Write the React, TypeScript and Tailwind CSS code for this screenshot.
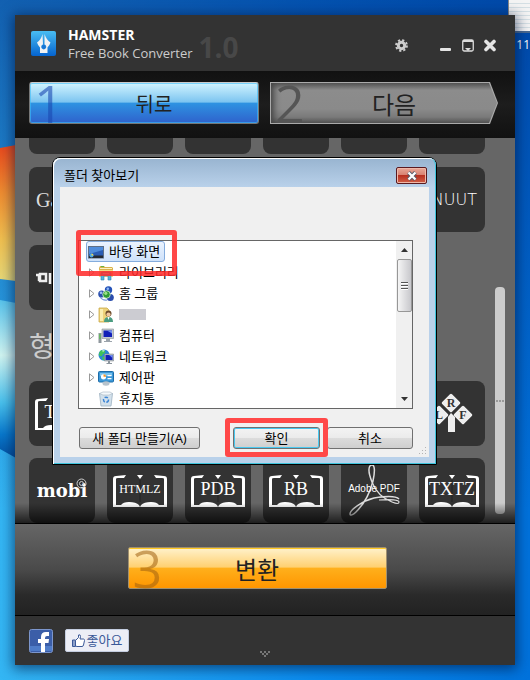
import type { ReactNode } from "react"

const KR = "font-['Open_Sans','Noto_Sans_CJK_KR',sans-serif]"

function LibraryIcon() {
  return (
    <svg width="16" height="16" viewBox="0 0 16 16">
      <path d="M1 3l1-2h4l1 1h7l1 1v9H1z" fill="#d9b24c" />
      <path d="M1 5h14v7H1z" fill="#f3dc85" />
      <path d="M2 3h12v1H2z" fill="#fbf3c4" />
      <path d="M3 1h3v1H3z" fill="#63b540" />
      <path d="M3 15V9q0-2 2-2h6q2 0 2 2v6h-3v-4H6v4z" fill="#55b4dc" stroke="#2b87b5" strokeWidth=".6" />
      <path d="M5 8h6v1H5z" fill="#c4ecf8" />
    </svg>
  )
}

function HomegroupIcon() {
  return (
    <svg width="16" height="16" viewBox="0 0 16 16">
      <circle cx="10.500" cy="4" r="3.700" fill="#2452b8" />
      <circle cx="3.700" cy="8" r="3.500" fill="#2b50ad" />
      <circle cx="12.300" cy="11.500" r="3.500" fill="#2a4dac" />
      <circle cx="8.500" cy="8.500" r="3.800" fill="#2f9c35" stroke="#d7f0d4" strokeWidth=".8" />
      <circle cx="7.800" cy="7.300" r="1.600" fill="#9ce087" />
      <circle cx="9.800" cy="2.800" r="1.300" fill="#8fb8f2" />
      <circle cx="3" cy="6.800" r="1.300" fill="#9dbdf5" />
      <path d="M2 11q3 4 7 3" stroke="#7696d8" strokeWidth="1.200" fill="none" />
    </svg>
  )
}

function UserIcon() {
  return (
    <svg width="16" height="16" viewBox="0 0 16 16">
      <path d="M1 1h8l2 2v12H1z" fill="#edd27a" stroke="#c9a847" strokeWidth=".8" />
      <path d="M2 2h3v12H2z" fill="#faedb0" />
      <circle cx="10.500" cy="6.500" r="3" fill="#6b4a2b" />
      <circle cx="10.500" cy="7.500" r="2.100" fill="#f0c7a0" />
      <path d="M6 15q0-5 4.500-5T15 15z" fill="#4a9c80" />
      <path d="M9.500 10h2l-1 3z" fill="#fff" />
    </svg>
  )
}

function ComputerIcon() {
  return (
    <svg width="16" height="16" viewBox="0 0 16 16">
      <path d="M4 1h11.500v9.500H4z" fill="#c3c9cf" stroke="#8a9299" strokeWidth=".6" />
      <path d="M5.500 2.500h8.500v6.500H5.500z" fill="#1220b8" />
      <path d="M9 2.500h5v3z" fill="#7390ee" />
      <path d="M8 11h4v2h2v1H6v-1h2z" fill="#9ca4ac" />
      <path d="M.5 5h3v10h-3z" fill="#8f979d" />
      <path d="M1.300 6h1.200v5H1.300z" fill="#58c04a" />
    </svg>
  )
}

function NetworkIcon() {
  return (
    <svg width="16" height="16" viewBox="0 0 16 16">
      <circle cx="6" cy="6" r="5.500" fill="#2a86d8" />
      <path d="M2 2q4-2 5 0t-2 3q-1 3-3 2T1 5zM4 8l4-1v3l-3 1.500z" fill="#3fc25a" />
      <path d="M4 1.500l3-.5-2 2z" fill="#d6f5e0" />
      <path d="M6.500 5h9v7h-9z" fill="#b9c1c9" stroke="#6d767f" strokeWidth=".5" />
      <path d="M7.500 6h7v5h-7z" fill="#1220b8" />
      <path d="M11 6h3.500v3z" fill="#6f8cf0" />
      <path d="M10 12h2v2h2v1H8.500v-1H10z" fill="#8c959d" />
    </svg>
  )
}

function ControlPanelIcon() {
  return (
    <svg width="16" height="16" viewBox="0 0 16 16">
      <rect x=".5" y="1.500" width="15" height="10.500" rx="1" fill="#3b98d8" stroke="#1d6ca8" />
      <path d="M2 3h12v3H2z" fill="#7cc4ee" />
      <circle cx="5.500" cy="6.800" r="2.600" fill="#fff" />
      <path d="M5.500 6.800V4.200a2.600 2.600 0 0 1 2.600 2.600z" fill="#f09428" />
      <path d="M9.500 5h4v1.200h-4zM9.500 8h4v1.200h-4z" fill="#fff" />
      <ellipse cx="8" cy="13.500" rx="3.500" ry="2.200" fill="#b7c3cc" />
    </svg>
  )
}

function RecycleIcon() {
  return (
    <svg width="16" height="16" viewBox="0 0 16 16">
      <path d="M1.500 2.500h13L13 15H3z" fill="#d3e1ec" stroke="#9db1c2" strokeWidth=".8" />
      <path d="M1.500 2.500L5 1h7l2.500 1.500L11 4H5z" fill="#f4f8fb" stroke="#a5b4c1" strokeWidth=".6" />
      <circle cx="8" cy="8.800" r="2.500" fill="none" stroke="#3d86d6" strokeWidth="1.500" strokeDasharray="3.500 1.500" />
    </svg>
  )
}

function DesktopIcon() {
  return (
    <svg width="16" height="16" viewBox="0 0 16 16">
      <rect x=".5" y="2.500" width="15" height="11.500" fill="#2a5db4" stroke="#5e6f86" />
      <path d="M1 3h14v3L1 10z" fill="#4f8ddc" />
      <path d="M1 11.500h14V14H1z" fill="#252b33" />
      <circle cx="3.500" cy="11.500" r="2" fill="#49a8e8" />
      <path d="M3.500 9.500a2 2 0 0 1 2 2h-2z" fill="#f2d549" />
    </svg>
  )
}

const TREE: { label: string; icon: ReactNode; expandable: boolean }[] = [
  { label: "라이브러리", icon: <LibraryIcon />, expandable: true },
  { label: "홈 그룹", icon: <HomegroupIcon />, expandable: true },
  { label: "", icon: <UserIcon />, expandable: true },
  { label: "컴퓨터", icon: <ComputerIcon />, expandable: true },
  { label: "네트워크", icon: <NetworkIcon />, expandable: true },
  { label: "제어판", icon: <ControlPanelIcon />, expandable: true },
  { label: "휴지통", icon: <RecycleIcon />, expandable: false },
]

function Tile({ children }: { children?: ReactNode }) {
  return (
    <div className="relative flex h-[65px] items-center justify-center overflow-hidden rounded-lg bg-[#333]">
      {children}
    </div>
  )
}

function Book({ label, size }: { label: string; size: string }) {
  return (
    <div className="relative flex h-8 w-[54px] items-center justify-center">
      <svg className="absolute inset-0" width="54" height="32" viewBox="0 0 54 32" fill="#fff">
        <path d="M13 0L3 1Q0 1 0 4v28h27l-1-2q-3-3-10-3-6 0-8 3H3V4q0-1 2-1h6z" />
        <path d="M41 0l10 1q3 0 3 3v28H27l1-2q3-3 10-3 6 0 8 3h5V4q0-1-2-1h-6z" />
        <path d="M24 0h6l-3 4z" />
        <path d="M26 5h2v22h-2z" fill="#2a2a2a" />
      </svg>
      <span className={`relative -mt-1 font-['Liberation_Serif',serif] leading-none text-white ${size}`}>{label}</span>
    </div>
  )
}

function Lrf() {
  return (
    <svg width="66" height="65" viewBox="0 0 66 65">
      <g fill="#eee">
        <rect x="25" y="15" width="14" height="14" rx="1.500" transform="rotate(45 32 22)" />
        <rect x="13" y="27" width="14" height="14" rx="1.500" transform="rotate(45 20 34)" />
        <rect x="37" y="27" width="14" height="14" rx="1.500" transform="rotate(45 44 34)" />
        <path d="M29 36l3-4 4 4v15h-7z" />
      </g>
      <g className="font-['Liberation_Serif',serif] text-[12px] font-bold" fill="#333" textAnchor="middle">
        <text x="32" y="26">R</text>
        <text x="20" y="38">L</text>
        <text x="44" y="38">F</text>
      </g>
    </svg>
  )
}

function Pdf() {
  return (
    <>
      <svg className="absolute inset-0" width="66" height="65" viewBox="0 0 66 65" fill="none" stroke="#ddd">
        <path
          d="M31 24C26 12 28 7 31 7s3 7 1 16c-3 12-10 24-17 31-3 3-6 4-6 2 0-4 12-13 24-16 12-2 22-2 25 1"
          strokeWidth="1.500"
        />
        <path d="M31 24c3 8 10 16 20 20 5 2 7 2 7 0s-8-3-20-2" strokeWidth="1.200" />
      </svg>
      <span className="relative -mt-1 whitespace-nowrap font-['Liberation_Sans_Narrow','Liberation_Sans',sans-serif] text-[10px] leading-none text-white">
        Adobe PDF
      </span>
    </>
  )
}

function Wallpaper() {
  return (
    <svg className="absolute left-0 top-[140px]" width="16" height="330" viewBox="0 0 16 330">
      <defs>
        <linearGradient id="warm" x1="0" y1="0" x2="0" y2="1">
          <stop offset="0" stopColor="#e8481c" />
          <stop offset=".35" stopColor="#ee8c30" />
          <stop offset=".7" stopColor="#f0c050" />
          <stop offset="1" stopColor="#e6d878" />
        </linearGradient>
        <linearGradient id="cool" x1="0" y1="0" x2="0" y2="1">
          <stop offset="0" stopColor="#58c4ec" />
          <stop offset=".35" stopColor="#d0f4f0" />
          <stop offset=".65" stopColor="#48c0ec" />
          <stop offset=".85" stopColor="#0878cc" />
          <stop offset="1" stopColor="#0450a0" />
        </linearGradient>
      </defs>
      <path d="M0 8l16-3v136l-16-2z" fill="url(#warm)" />
      <path d="M0 160l16 3v155l-16-9z" fill="url(#cool)" />
    </svg>
  )
}

function TitleBar() {
  return (
    <header className="flex h-14 items-center bg-[#333] pl-4 pr-[19px]">
      <svg width="25" height="25" viewBox="0 0 25 25">
        <defs>
          <linearGradient id="logo" x1="0" y1="0" x2="0" y2="1">
            <stop offset="0" stopColor="#49bdf2" />
            <stop offset="1" stopColor="#0463cf" />
          </linearGradient>
        </defs>
        <rect width="25" height="25" rx="2" fill="url(#logo)" />
        <path
          d="M11.500 3L12 13.500a2.500 2.500 0 1 0 1.500 0L13.500 3q2 6 6 8.500-1 3-3 5V22H9v-5.500q-2-2-3-5Q10 9 11.500 3z"
          fill="#f0f2f4"
        />
        <circle cx="12.700" cy="15.800" r="1.800" fill="#1674d4" />
      </svg>
      <div className="ml-3 pt-0.5 font-['Open_Sans',sans-serif]">
        <h1 className="text-sm font-bold leading-[18px] text-white">HAMSTER</h1>
        <p className="whitespace-nowrap text-[13px] leading-[18px] text-[#ccc]">Free Book Converter</p>
      </div>
      <span className="ml-1.5 mt-2 font-['Open_Sans',sans-serif] text-[28px] font-bold leading-none text-[#484848]">1.0</span>
      <div className="ml-auto mt-1 flex items-center">
        <button aria-label="Settings" className="mr-8">
          <svg width="13" height="13" viewBox="0 0 13 13" fill="none" stroke="#ccc">
            <circle cx="6.500" cy="6.500" r="3.200" strokeWidth="3" />
            <circle cx="6.500" cy="6.500" r="5.400" strokeWidth="2" strokeDasharray="2.200 2.040" />
          </svg>
        </button>
        <button aria-label="Minimize" className="mr-[11px]">
          <svg width="11" height="13" viewBox="0 0 11 13">
            <rect y="9" width="11" height="3" rx="1" fill="#e4e4e4" />
          </svg>
        </button>
        <button aria-label="Restore" className="mr-2.5">
          <svg width="12" height="13" viewBox="0 0 12 13">
            <rect x=".75" y="1" width="10.500" height="11" rx="1.500" fill="none" stroke="#ddd" strokeWidth="1.300" />
            <path d="M1 1h10v2H1zM3 9h6l-3 3z" fill="#ddd" />
          </svg>
        </button>
        <button aria-label="Close">
          <svg width="12" height="13" viewBox="0 0 12 13">
            <path d="M2 2.500l8 8M10 2.500l-8 8" stroke="#e4e4e4" strokeWidth="3.600" strokeLinecap="round" />
          </svg>
        </button>
      </div>
    </header>
  )
}

const STEP_NUMBER = "absolute inset-y-0 left-1 font-['Open_Sans',sans-serif] text-[52px] leading-[40px]"

function Steps() {
  return (
    <nav className="flex h-[67px] gap-[11px] bg-linear-to-b from-[#111] via-[#1d1d1d] to-[#111] pb-3.5 pl-3.5 pr-[17px] pt-[11px]">
      <button className="relative flex-1 rounded-[3px] border border-[#777] border-t-[#ccc] bg-[linear-gradient(#d2f4ff,#7cc4f0_48%,#2e93e2_50%,#2f62cc)] pt-1 text-xl text-[#222] shadow-[inset_0_0_0_1px_rgba(60,190,250,0.6)]">
        <span className={`${STEP_NUMBER} text-[#1a48b0]/60`}>1</span>
        <span className="relative pl-5">뒤로</span>
      </button>
      <button className="relative flex-1 bg-[#aaa] pt-1 text-2xl text-[#222] [clip-path:polygon(0_0,calc(100%-8px)_0,100%_50%,calc(100%-8px)_100%,0_100%)]">
        <span className="absolute inset-px bg-[linear-gradient(#555,#8c8c8c_18%,#8a8a8a_65%,#7a7a7a_85%,#555)] shadow-[inset_6px_0_6px_-3px_#444] [clip-path:polygon(0_0,calc(100%-8px)_0,100%_50%,calc(100%-8px)_100%,0_100%)]">
          <span className={`${STEP_NUMBER} text-[#555]`}>2</span>
        </span>
        <span className="relative pl-5">다음</span>
      </button>
    </nav>
  )
}

function FormatList() {
  return (
    <section className="relative flex h-[385px] overflow-hidden bg-[#666] pl-3.5">
      <div className="flex-1">
        <div className="grid grid-cols-6 gap-x-3">
          {[0, 1, 2, 3, 4, 5].map((i) => (
            <div key={i} className="h-4 rounded-b-lg bg-[#333]" />
          ))}
        </div>
        <div className="mt-[13px] grid grid-cols-6 gap-x-3 gap-y-[13px]">
          <Tile>
            <span className="w-full pl-[7px] font-['Liberation_Serif',serif] text-xl text-[#ddd]">Ga</span>
          </Tile>
          <Tile />
          <Tile />
          <Tile />
          <Tile />
          <Tile>
            <span className="w-full pr-2 text-right font-['DejaVu_Sans',sans-serif] text-base font-extralight text-white">NUUT</span>
          </Tile>
          <Tile>
            <svg className="w-full" width="66" height="12" viewBox="0 0 66 12" fill="none" stroke="#eee" strokeWidth="2">
              <path d="M7 3h3v6M11 2h6v7h-6zM21 12V1" strokeWidth="2.500" />
            </svg>
          </Tile>
        </div>
        <h2 className="flex h-[71px] items-center text-[28px] leading-none text-[#ccc]">형식</h2>
        <div className="grid grid-cols-6 gap-3">
          <Tile>
            <Book label="TXT" size="text-lg" />
          </Tile>
          <Tile />
          <Tile />
          <Tile />
          <Tile />
          <Tile>
            <Lrf />
          </Tile>
          <Tile>
            <span className="font-['DejaVu_Serif',serif] text-lg font-bold leading-none text-white">mobi</span>
            <svg className="absolute right-2 top-5" width="11" height="11" viewBox="0 0 11 11" fill="none" stroke="#ccc">
              <circle cx="5.500" cy="5.500" r="4.500" />
              <circle cx="5.500" cy="5.500" r="2" />
            </svg>
          </Tile>
          <Tile>
            <Book label="HTMLZ" size="text-xs" />
          </Tile>
          <Tile>
            <Book label="PDB" size="text-lg" />
          </Tile>
          <Tile>
            <Book label="RB" size="text-lg" />
          </Tile>
          <Tile>
            <Pdf />
          </Tile>
          <Tile>
            <Book label="TXTZ" size="text-lg" />
          </Tile>
        </div>
      </div>
      <div className="w-[30px] pl-2.5 pt-[149px]">
        <div className="flex h-[227px] w-2.5 items-center justify-center gap-px rounded bg-[#ccc]">
          <i className="size-0.5 bg-[#999]" />
          <i className="size-0.5 bg-[#999]" />
          <i className="size-0.5 bg-[#999]" />
        </div>
      </div>
      <div className="absolute inset-x-0 bottom-0 h-5 bg-linear-to-b from-transparent to-black/70" />
    </section>
  )
}

const WIN_BUTTON =
  "rounded-[3px] border border-[#707070] bg-[linear-gradient(#f3f3f3,#ebebeb_48%,#dcdcdc_50%,#cfcfcf)] text-[13px] leading-none text-black"

function BrowseDialog() {
  return (
    <div
      role="dialog"
      aria-labelledby="browse-title"
      className="absolute left-[37px] top-[142px] w-[385px] rounded-t-lg border border-black bg-[#b9d1ea] text-[13px] text-black shadow-[inset_1px_1px_0_#fff,inset_-1px_-1px_0_#3ec4dc]"
    >
      <div className="flex h-[29px] items-center justify-between rounded-t-[7px] bg-linear-to-b from-[#98b4d0] to-[#b9d1ea] pl-[11px] pr-[9px] shadow-[inset_1px_1px_0_#fff,inset_-1px_0_0_#3ec4dc]">
        <h2 id="browse-title" className="mt-1.5">
          폴더 찾아보기
        </h2>
        <button
          aria-label="닫기"
          className="mt-1.5 flex h-[17px] w-[31px] items-center justify-center rounded-xs border border-[#5a1a20] bg-[linear-gradient(#e8a898,#d88070_48%,#b83020_50%,#d06048)] shadow-[inset_0_0_0_1px_#f0b8a8]"
        >
          <svg width="12" height="10" viewBox="0 0 12 10">
            <path d="M2.500 1.500l7 7M9.500 1.500l-7 7" stroke="#555b6b" strokeWidth="4" />
            <path d="M2.500 1.500l7 7M9.500 1.500l-7 7" stroke="#fff" strokeWidth="2.300" />
          </svg>
        </button>
      </div>
      <div className="relative mx-[7px] mb-[7px] bg-[#f0f0f0] pb-2 pl-[18px] pr-4 pt-[53px]">
        <div className="relative">
          <div className="flex h-[169px] overflow-hidden border border-[#666] bg-white">
            <ul className="flex-1 pl-[7px]">
              <li className="flex h-[21px] w-[79px] items-center gap-[5px] whitespace-nowrap rounded-[3px] border border-[#84acdd] bg-linear-to-b from-[#eaf3fe] to-[#cfe2fa] pl-px">
                <DesktopIcon />
                바탕 화면
              </li>
              {TREE.map((item, i) => (
                <li key={i} className="flex h-[21px] items-center pl-[3px]">
                  <svg className="mr-[3px]" width="6" height="9" viewBox="0 0 6 9">
                    {item.expandable && <path d="M.5.8v7.400l4.500-3.700z" fill="#fff" stroke="#999" />}
                  </svg>
                  {item.icon}
                  {item.label ? (
                    <span className="ml-[5px]">{item.label}</span>
                  ) : (
                    <span className="ml-[5px] h-[11px] w-[27px] bg-[#ccccd2]" />
                  )}
                </li>
              ))}
            </ul>
            <div className="flex w-4 flex-col items-center bg-[#f0f0f0]">
              <svg className="my-[7px]" width="7" height="4" viewBox="0 0 7 4">
                <path d="M3.500 0L7 4H0z" fill="#333" />
              </svg>
              <div className="flex h-[53px] w-[15px] flex-col items-center justify-center gap-px rounded-xs border border-[#979797] bg-linear-to-r from-[#f5f5f5] to-[#c8c8cc]">
                <i className="h-0.5 w-[7px] border-t border-[#555] bg-white" />
                <i className="h-0.5 w-[7px] border-t border-[#555] bg-white" />
                <i className="h-0.5 w-[7px] border-t border-[#555] bg-white" />
              </div>
              <svg className="mb-[7px] mt-auto" width="7" height="4" viewBox="0 0 7 4">
                <path d="M0 0h7L3.500 4z" fill="#333" />
              </svg>
            </div>
          </div>
          <span className="absolute -left-0.5 -top-2.5 h-[46px] w-[101px] rounded-[3px] border-5 border-[#ff2828]/85" />
        </div>
        <div className="mt-[18px] flex h-[22px]">
          <button className={`${WIN_BUTTON} ml-px mr-[33px] w-[121px]`}>새 폴더 만들기(A)</button>
          <div className="relative flex w-[87px]">
            <button className={`${WIN_BUTTON} flex-1 border-[#3c7fb1] shadow-[inset_0_0_0_1px_#48c8f0]`}>확인</button>
            <span className="absolute -inset-x-2 -bottom-2 -top-[9px] rounded-[3px] border-5 border-[#ff4848]" />
          </div>
          <button className={`${WIN_BUTTON} ml-[7px] w-[86px]`}>취소</button>
        </div>
        <svg className="absolute bottom-0.5 right-0.5" width="9" height="9" viewBox="0 0 9 9" fill="#b4b4b4">
          <path d="M7 1h1v1H7zM4 4h1v1H4zM7 4h1v1H7zM1 7h1v1H1zM4 7h1v1H4zM7 7h1v1H7z" />
        </svg>
      </div>
    </div>
  )
}

export default function App() {
  return (
    <main
      className={`relative min-h-screen overflow-hidden bg-[linear-gradient(to_bottom,rgba(0,50,140,0.65),rgba(0,60,160,0)_75%),linear-gradient(to_right,#34b6f4,#0a8cf0_60%,#0072dc)] p-[15px] ${KR}`}
    >
      <Wallpaper />
      <div className="absolute right-0 top-0 h-[33px] w-[22px] border-b-2 border-l border-b-[#4a6a90] border-l-[#888] bg-[repeating-linear-gradient(#f4f4f4_0_3px,#d4dfe4_3px_4px)]" />
      <span className="absolute right-0 top-[37px] text-xs text-white">111</span>

      <div className="relative bg-[#333] shadow-[0_2px_12px_2px_rgba(0,20,60,0.6)]">
        <TitleBar />
        <Steps />
        <FormatList />
        <section className="flex justify-center border-y border-black bg-[linear-gradient(#666,#4a4a4a_50%,#2a2a2a_78%,#222)] pb-[26px] pl-3.5 pr-[30px] pt-[23px]">
          <button className="relative h-[42px] w-[259px] rounded-xs border border-[#a09070] bg-[linear-gradient(#fff2cc,#ffd070_48%,#ffb01c_50%,#ff9600)] pt-1 text-2xl text-[#222] shadow-[inset_0_1px_0_#ffc820]">
            <span className={`${STEP_NUMBER} text-[#a06010]/55`}>3</span>
            <span className="relative">변환</span>
          </button>
        </section>
        <footer className="relative flex h-[49px] items-center gap-3 pl-3.5">
          <a href="#facebook" aria-label="Facebook">
            <svg width="24" height="24" viewBox="0 0 24 24">
              <rect x=".5" y=".5" width="23" height="23" rx="2" fill="#3b5ea8" stroke="#7c96cc" />
              <path d="M1 17h22v5H1z" fill="#4f7cc8" />
              <path d="M12 23v-9H9v-4h3V8q0-5 5-5h3v4h-2q-2 0-2 2v1h4l-.5 4H16v9z" fill="#fff" />
            </svg>
          </a>
          <button className="flex h-[23px] w-16 items-center justify-center gap-0.5 whitespace-nowrap rounded-xs border border-[#c4cde0] bg-[#eceef6] text-[13px] leading-none text-[#3b5998]">
            <svg width="13" height="13" viewBox="0 0 13 13" fill="#fff" stroke="#3b5998">
              <path d="M.5 6h3v6.500h-3z" fill="#8c9fc8" />
              <path d="M3.500 6.500l3-3V1q2-1 2 1.500L8 5h3.500q1 0 1 1.500L11.500 11q-.3 1.500-1.500 1.500H5L3.500 12z" />
            </svg>
            좋아요
          </button>
          <svg className="absolute bottom-2 left-1/2 -translate-x-1/2" width="10" height="6" viewBox="0 0 10 6" fill="#777">
            <path d="M0 0h2v2H0zM4 0h2v2H4zM8 0h2v2H8zM2 2h2v2H2zM6 2h2v2H6zM4 4h2v2H4z" />
          </svg>
        </footer>
        <BrowseDialog />
      </div>
    </main>
  )
}
